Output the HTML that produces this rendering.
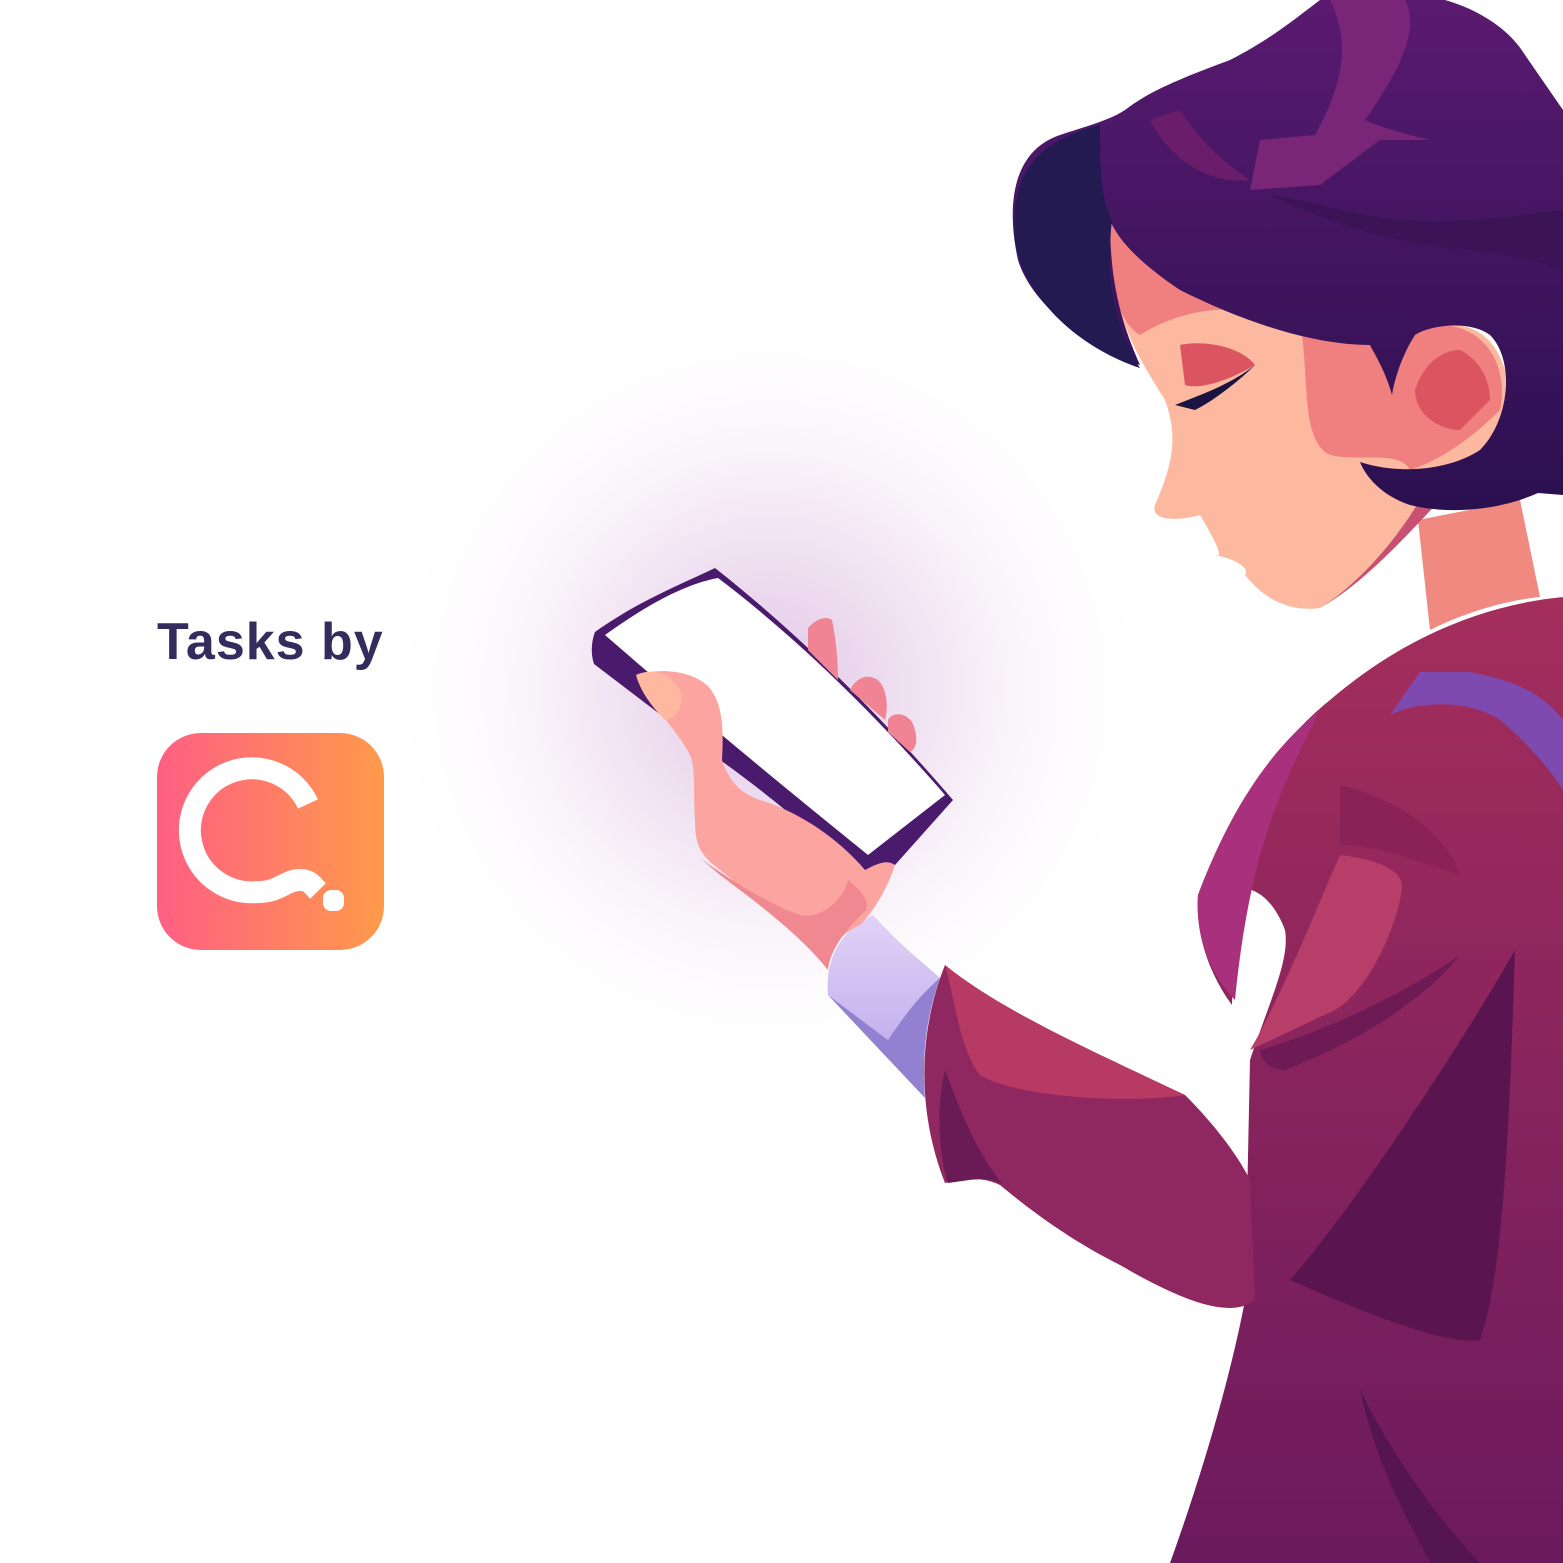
<!DOCTYPE html>
<html><head><meta charset="utf-8"><style>
html,body{margin:0;padding:0;background:#fff;}
body{width:1563px;height:1563px;position:relative;overflow:hidden;font-family:"Liberation Sans",sans-serif;}
.t{position:absolute;left:157px;top:612px;font-size:52px;font-weight:bold;color:#342c5c;letter-spacing:1px;}
svg{position:absolute;left:0;top:0;}
</style></head><body>
<svg width="1563" height="1563" viewBox="0 0 1563 1563">
<defs>
<radialGradient id="glow" cx="770" cy="690" r="390" gradientUnits="userSpaceOnUse">
<stop offset="0" stop-color="#e2c7e6"/><stop offset="0.5" stop-color="#f5ebf6"/><stop offset="1" stop-color="#fff" stop-opacity="0"/></radialGradient>
<linearGradient id="logo" x1="0" x2="1"><stop offset="0" stop-color="#ff5f83"/><stop offset="1" stop-color="#ff9a4a"/></linearGradient>
<linearGradient id="hair" x1="0" y1="0" x2="0" y2="1"><stop offset="0" stop-color="#5a1a70"/><stop offset="1" stop-color="#2a1050"/></linearGradient>
<linearGradient id="coat" x1="0" y1="0" x2="0" y2="1"><stop offset="0" stop-color="#a42e5c"/><stop offset="1" stop-color="#6b1a5e"/></linearGradient>
<linearGradient id="cuff" x1="0" y1="0" x2="0" y2="1"><stop offset="0" stop-color="#e2d2f6"/><stop offset="1" stop-color="#c4b2ee"/></linearGradient>
</defs>
<circle cx="770" cy="690" r="390" fill="url(#glow)"/>
<!-- logo -->
<rect x="157" y="733" width="227" height="217" rx="44" fill="url(#logo)"/>
<path d="M308 804 A62 62 0 1 0 258 892 C280 892 285 880 300 880 C310 880 312 885 318 891" fill="none" stroke="#fff" stroke-width="22"/>
<rect x="323" y="890" width="21" height="21" rx="8" fill="#fff"/>
<!-- coat back -->
<path d="M1330 700 C1400 640 1480 605 1563 597 L1563 1563 L1170 1563 C1200 1480 1230 1380 1245 1300 L1250 1060 C1270 1000 1290 960 1285 930 C1270 890 1245 885 1235 890 L1232 1005 C1210 975 1195 935 1198 895 C1230 810 1280 740 1330 700Z" fill="url(#coat)"/>
<path d="M1198 895 C1230 810 1270 750 1320 710 C1280 790 1250 850 1235 1000 C1210 975 1195 935 1198 895Z" fill="#a8307c"/>
<path d="M1360 1390 C1380 1480 1420 1540 1430 1563 L1480 1563 C1430 1510 1390 1450 1360 1390Z" fill="#541550"/>
<path d="M1515 950 C1470 1030 1360 1200 1290 1280 C1380 1320 1450 1345 1480 1340 C1505 1270 1510 1100 1515 950Z" fill="#5a1550"/>
<!-- neck -->
<path d="M1418 520 L1430 630 C1470 610 1510 600 1540 597 L1520 500Z" fill="#f08a80"/>
<!-- face -->
<path d="M1110 210 C1100 300 1140 360 1165 400 C1180 440 1170 470 1155 505 C1150 520 1175 522 1200 515 C1215 540 1225 560 1215 555 C1240 560 1250 570 1245 575 C1265 600 1290 612 1320 608 C1370 580 1420 520 1450 490 C1490 470 1510 420 1505 370 C1490 320 1450 320 1420 330 L1300 300 C1230 280 1170 240 1110 210Z" fill="#fdb8a0"/>
<path d="M1110 210 C1105 270 1115 320 1140 335 C1180 310 1230 300 1300 320 C1310 380 1300 440 1330 455 C1360 462 1400 450 1410 470 C1440 460 1470 440 1500 410 C1510 360 1480 325 1440 325 L1300 300 C1230 280 1170 240 1110 210Z" fill="#f08080"/>
<path d="M1180 345 C1200 340 1240 345 1255 365 C1230 380 1200 390 1185 385Z" fill="#db5560"/>
<path d="M1415 390 C1425 360 1445 350 1460 350 C1480 360 1490 380 1490 400 L1460 430 C1440 430 1415 415 1415 390Z" fill="#db5560"/>
<path d="M1175 405 C1200 395 1230 385 1255 365 C1240 380 1215 400 1195 410Z" fill="#1b1340"/>
<path d="M1320 608 C1370 580 1420 520 1450 490 L1420 500 C1390 550 1350 590 1320 608Z" fill="#c85070"/>
<!-- hair -->
<path d="M1140 365 C1080 345 1030 300 1018 260 C1005 200 1015 150 1060 135 C1090 125 1110 120 1125 110 C1150 90 1190 75 1230 60 C1270 40 1300 15 1320 0 L1445 0 C1480 10 1510 30 1525 55 L1563 110 L1563 495 L1538 493 C1500 510 1450 515 1410 505 C1380 495 1365 475 1360 462 C1400 475 1450 470 1480 450 C1510 420 1515 360 1490 335 C1470 320 1430 325 1415 335 C1405 350 1395 375 1392 395 C1385 370 1375 355 1370 345 C1310 345 1240 320 1180 290 C1150 270 1120 245 1110 220 C1110 280 1120 320 1140 365Z" fill="url(#hair)"/>
<path d="M1015 240 C1010 170 1040 140 1100 125 C1100 160 1100 200 1112 220 C1105 280 1115 330 1140 368 C1080 348 1025 300 1015 240Z" fill="#231a52"/>
<path d="M1330 0 C1350 40 1345 80 1315 135 L1260 140 L1250 190 L1320 185 L1380 140 L1430 140 C1390 130 1375 125 1365 120 C1400 70 1420 30 1405 0Z" fill="#7a2678"/>
<path d="M1150 120 C1170 160 1210 185 1250 180 C1220 160 1200 140 1180 110Z" fill="#6a1d6a"/>
<path d="M1270 195 C1330 225 1400 245 1470 250 C1510 255 1540 262 1563 270 L1563 210 C1520 215 1460 225 1400 220 C1350 215 1310 200 1270 195Z" fill="#3d1358"/>
<!-- arm (sleeve) -->
<path d="M945 965 C1000 1010 1090 1050 1185 1095 C1220 1130 1240 1160 1250 1180 L1255 1300 C1230 1320 1180 1300 1120 1265 C1070 1240 1030 1210 1000 1185 C980 1175 960 1180 945 1183 C920 1120 915 1040 945 965Z" fill="#8f2860"/>
<path d="M945 965 C1000 1010 1090 1050 1185 1095 C1120 1105 1010 1095 980 1075 C960 1050 955 1000 945 965Z" fill="#b73a64"/>
<path d="M945 1070 C935 1110 940 1160 948 1183 C970 1180 990 1175 1003 1185 C975 1150 960 1110 945 1070Z" fill="#6a1a55"/>
<path d="M1340 785 C1380 795 1440 820 1460 875 C1400 855 1370 845 1340 845Z" fill="#8a2258"/>
<path d="M1340 855 C1380 860 1400 870 1402 885 C1400 920 1370 990 1335 1010 L1250 1050 C1280 1000 1320 900 1340 855Z" fill="#b83e6a"/>
<path d="M1260 1050 C1330 1030 1410 990 1460 955 C1420 1005 1350 1045 1285 1070 C1270 1070 1260 1060 1260 1050Z" fill="#6e1a55"/>
<path d="M1390 715 C1420 700 1470 700 1500 720 C1530 745 1550 770 1563 790 L1563 720 C1540 690 1510 680 1470 672 L1420 672Z" fill="#7e4ab0"/>
<!-- cuff -->
<path d="M873 915 C900 945 920 960 940 978 C915 1010 900 1030 888 1040 L828 995 C825 960 840 930 873 915Z" fill="url(#cuff)"/>
<path d="M828 995 L888 1040 C905 1015 920 995 940 978 C925 1020 922 1060 925 1098Z" fill="#9280d0"/>
<!-- phone -->
<path d="M595 632 C640 600 680 585 715 568 C800 635 880 715 953 800 L895 865 L866 875 C820 840 770 795 720 760 L594 664 C590 652 592 640 595 632Z" fill="#4a1b6c"/>
<path d="M605 635 C640 610 680 585 718 578 C800 640 880 720 945 795 L868 855 C800 800 720 735 605 635Z" fill="#fff"/>
<!-- hand -->
<path d="M808 628 C815 620 825 615 832 620 C836 640 838 660 838 680 L808 650Z" fill="#f08494"/>
<path d="M850 690 C855 680 865 672 878 680 C888 690 888 710 885 720 L850 690Z" fill="#f08494"/>
<path d="M888 720 C892 712 905 712 912 722 C918 735 918 748 910 752 L888 732Z" fill="#f08494"/>
<path d="M636 675 C660 668 690 670 708 686 C722 702 724 725 722 760 C730 785 745 795 760 800 C800 812 840 840 865 870 C880 862 888 860 895 865 C885 895 870 915 860 925 C840 935 830 945 828 970 C810 940 770 910 720 870 C700 855 695 845 695 820 C693 790 696 770 690 755 C680 735 660 715 645 690Z" fill="#fca49f"/>
<path d="M636 675 C650 668 670 672 680 690 C685 705 678 718 665 720 C650 705 640 690 636 675Z" fill="#feb8a0"/>
<path d="M700 858 C730 880 770 905 800 915 C825 920 845 895 848 880 C860 890 870 900 866 910 C845 930 830 950 828 970 C800 935 760 905 720 875Z" fill="#ef8890"/>
</svg>
<div class="t">Tasks by</div>
</body></html>
